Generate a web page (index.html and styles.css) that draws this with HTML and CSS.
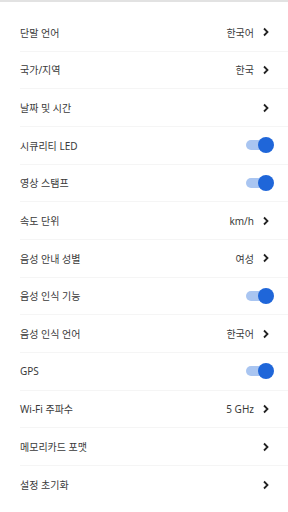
FILE: index.html
```html
<!DOCTYPE html>
<html lang="ko">
<head>
  <meta charset="UTF-8">
  <meta name="viewport" content="width=device-width, initial-scale=1.0">
  <title>설정</title>
  <link rel="stylesheet" href="styles.css">
</head>
<body>
  <div class="settings">
    <div class="row">
      <span class="label">단말 언어</span>
      <span class="value">한국어</span>
      <span class="chevron"><svg viewBox="0 0 8 10" width="8" height="10"><path d="M2 1.5 L5.5 5 L2 8.5" fill="none" stroke="#222" stroke-width="1.8"/></svg></span>
    </div>
    <div class="row">
      <span class="label">국가/지역</span>
      <span class="value">한국</span>
      <span class="chevron"><svg viewBox="0 0 8 10" width="8" height="10"><path d="M2 1.5 L5.5 5 L2 8.5" fill="none" stroke="#222" stroke-width="1.8"/></svg></span>
    </div>
    <div class="row">
      <span class="label">날짜 및 시간</span>
      <span class="value"></span>
      <span class="chevron"><svg viewBox="0 0 8 10" width="8" height="10"><path d="M2 1.5 L5.5 5 L2 8.5" fill="none" stroke="#222" stroke-width="1.8"/></svg></span>
    </div>
    <div class="row">
      <span class="label">시큐리티 LED</span>
      <span class="toggle on"></span>
    </div>
    <div class="row">
      <span class="label">영상 스탬프</span>
      <span class="toggle on"></span>
    </div>
    <div class="row">
      <span class="label">속도 단위</span>
      <span class="value">km/h</span>
      <span class="chevron"><svg viewBox="0 0 8 10" width="8" height="10"><path d="M2 1.5 L5.5 5 L2 8.5" fill="none" stroke="#222" stroke-width="1.8"/></svg></span>
    </div>
    <div class="row">
      <span class="label">음성 안내 성별</span>
      <span class="value">여성</span>
      <span class="chevron"><svg viewBox="0 0 8 10" width="8" height="10"><path d="M2 1.5 L5.5 5 L2 8.5" fill="none" stroke="#222" stroke-width="1.8"/></svg></span>
    </div>
    <div class="row">
      <span class="label">음성 인식 기능</span>
      <span class="toggle on"></span>
    </div>
    <div class="row">
      <span class="label">음성 인식 언어</span>
      <span class="value">한국어</span>
      <span class="chevron"><svg viewBox="0 0 8 10" width="8" height="10"><path d="M2 1.5 L5.5 5 L2 8.5" fill="none" stroke="#222" stroke-width="1.8"/></svg></span>
    </div>
    <div class="row">
      <span class="label">GPS</span>
      <span class="toggle on"></span>
    </div>
    <div class="row">
      <span class="label">Wi-Fi 주파수</span>
      <span class="value">5 GHz</span>
      <span class="chevron"><svg viewBox="0 0 8 10" width="8" height="10"><path d="M2 1.5 L5.5 5 L2 8.5" fill="none" stroke="#222" stroke-width="1.8"/></svg></span>
    </div>
    <div class="row">
      <span class="label">메모리카드 포맷</span>
      <span class="value"></span>
      <span class="chevron"><svg viewBox="0 0 8 10" width="8" height="10"><path d="M2 1.5 L5.5 5 L2 8.5" fill="none" stroke="#222" stroke-width="1.8"/></svg></span>
    </div>
    <div class="row last">
      <span class="label">설정 초기화</span>
      <span class="value"></span>
      <span class="chevron"><svg viewBox="0 0 8 10" width="8" height="10"><path d="M2 1.5 L5.5 5 L2 8.5" fill="none" stroke="#222" stroke-width="1.8"/></svg></span>
    </div>
  </div>
</body>
</html>
```

FILE: styles.css
```css
body {
  margin: 0;
  background: #fff;
  font-family: "Noto Sans", "Noto Sans CJK KR", sans-serif;
  color: #3a3a3a;
}

.settings {
  border-top: 2px solid #e2e2e2;
  padding-top: 12px;
}

/* one setting line, divider starts under the label */
.row {
  display: flex;
  align-items: center;
  height: 37.67px;
  box-sizing: border-box;
  margin-left: 20px;
  padding-right: 18px;
  border-bottom: 1px solid #f5f5f5;
  font-size: 10px;
}

.row.last {
  border-bottom: none;
}

.label {
  flex: 1;
}

.value {
  margin-right: 8px;
}

.chevron {
  display: flex;
  width: 8px;
}

/* switch */
.toggle {
  position: relative;
  width: 27px;
  height: 10px;
  margin-right: -3px;
  border-radius: 5px;
  background: #a9c5f1;
}

.toggle::after {
  content: "";
  position: absolute;
  right: -1px;
  top: -3px;
  width: 16px;
  height: 16px;
  border-radius: 50%;
  background: #1f66d9;
}
```
